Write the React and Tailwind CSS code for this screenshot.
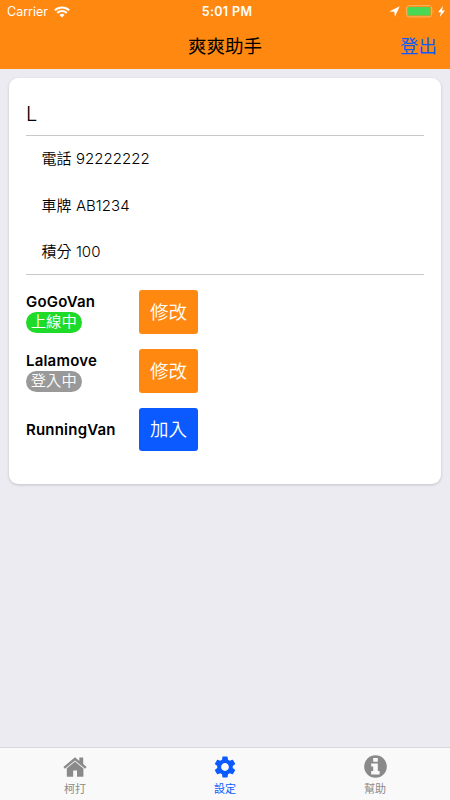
import { MdSettings } from "react-icons/md";

const details = [
  { label: "電話", value: "92222222" },
  { label: "車牌", value: "AB1234" },
  { label: "積分", value: "100" },
];

const services = [
  { name: "GoGoVan", status: "上線中", badge: "bg-[#1fdb29]", action: "修改", button: "bg-[#ff8811]" },
  { name: "Lalamove", status: "登入中", badge: "bg-[#999999]", action: "修改", button: "bg-[#ff8811]" },
  { name: "RunningVan", action: "加入", button: "bg-[#0a5aff]" },
];

function HomeIcon() {
  return (
    <svg width="24" height="20" viewBox="0 0 24 20" fill="currentColor">
      <path d="M12 0.3 0.4 10 1.9 11.8 12 3.5 22.1 11.8 23.6 10 20.2 7.1V0.5H16.3V3.9Z" />
      <path d="M12 4.6 3.8 11.3V19.8H10.2V13.4H14V19.8H20.4V11.4Z" />
    </svg>
  );
}

function InfoIcon() {
  return (
    <svg width="23" height="23" viewBox="0 0 23 23">
      <circle cx="11.5" cy="11.5" r="11.3" fill="currentColor" />
      <path d="M9.2 3H13.8V6.8H9.2ZM7.2 8.6H13.8V16H15.6V19.4H7.2V16H9.2V11.6H7.2Z" fill="#f9f9f9" />
    </svg>
  );
}

function StatusBar() {
  return (
    <div className="grid h-[23px] grid-cols-3 items-center text-[12.5px] leading-none text-white">
      <div className="flex items-center gap-[6px] pl-[7px]">
        <span className="pt-[1px]">Carrier</span>
        <svg width="16" height="12" viewBox="0 0 16 12" fill="none" stroke="currentColor" strokeWidth="2">
          <path d="M0.8 4.4a10.2 10.2 0 0 1 14.4 0M3.2 7a6.8 6.8 0 0 1 9.6 0" />
          <path d="M8 11.5 5.5 9a3.5 3.5 0 0 1 5 0Z" fill="currentColor" stroke="none" />
        </svg>
      </div>
      <span className="pl-[4px] pt-[1px] text-center font-semibold tracking-[0.35px]">5:01 PM</span>
      <div className="flex items-center justify-end pr-[5px]">
        <svg className="mr-[6px]" width="11" height="11" viewBox="0 0 11 11" fill="currentColor">
          <path d="M10.7 0.2 0.2 5.6 5.3 5.8 5.9 10.7Z" />
        </svg>
        <svg className="mr-[3px]" width="29" height="13" viewBox="0 0 29 13" fill="none">
          <rect x="0.7" y="0.7" width="25" height="11.2" rx="2.3" stroke="#ffb566" strokeWidth="1" />
          <rect x="2" y="2" width="22.4" height="8.6" rx="0.8" fill="#48d856" />
          <path d="M27 4.5q1.6 1.8 0 3.7Z" fill="#ffb566" />
        </svg>
        <svg width="7" height="11" viewBox="0 0 7 11" fill="currentColor">
          <path d="M5 0 0 6.2H2.9L1.8 11 7 4.5H4.1Z" />
        </svg>
      </div>
    </div>
  );
}

function Header() {
  return (
    <header className="h-[69px] bg-[#ff8811]">
      <StatusBar />
      <div className="grid h-[46px] grid-cols-3 items-center text-[18.5px] leading-none">
        <span />
        <h1 className="text-center font-normal text-black">爽爽助手</h1>
        <button className="pr-[13px] text-right font-normal text-[#0a5aff]">登出</button>
      </div>
    </header>
  );
}

function ServiceRow({ name, status, badge, action, button }) {
  return (
    <div className="flex h-[43.5px] items-center">
      <div className="w-[113px]">
        <div className="text-[15px] font-semibold leading-[21px] tracking-[0.2px]">{name}</div>
        {status && (
          <span className={`flex h-[21px] w-[55.5px] items-center justify-center rounded-full pb-[1px] text-[15.3px] font-[350] leading-none text-white ${badge}`}>
            {status}
          </span>
        )}
      </div>
      <button className={`h-[43.5px] w-[59px] rounded-[3px] text-[18.5px] font-[350] leading-none text-white ${button}`}>
        {action}
      </button>
    </div>
  );
}

function Tab({ icon, label, active }) {
  return (
    <button className={`flex flex-col items-center pt-[6px] ${active ? "text-[#0a5aff]" : "text-[#8a8a8a]"}`}>
      <span className="flex h-[25px] items-center justify-center">{icon}</span>
      <span className="mt-[4px] text-[11px] leading-[13px]">{label}</span>
    </button>
  );
}

export default function App() {
  return (
    <div className="flex h-screen w-full flex-col bg-[#ebebf1] font-['Inter','Noto_Sans_CJK_TC',sans-serif] text-black">
      <Header />

      <main className="flex-1 px-[9px] pt-[9px]">
        <section className="h-[406px] rounded-[9px] bg-white px-[17px] pt-[18px] shadow-[0_1px_3px_rgba(0,0,0,0.18)]">
          <h2 className="h-[40px] border-b border-[#c8c8c8] text-[20px] font-[350] leading-[36px]">L</h2>
          <div className="flex flex-col gap-[1.5px] border-b border-[#c8c8c8] pl-[15.5px]">
            {details.map((item) => (
              <p key={item.label} className="flex h-[45px] items-center text-[15px] font-[350] leading-none tracking-[0.05px]">
                {item.label} {item.value}
              </p>
            ))}
          </div>
          <div className="flex flex-col gap-[15.2px] pt-[15.4px]">
            {services.map((service) => (
              <ServiceRow key={service.name} {...service} />
            ))}
          </div>
        </section>
      </main>

      <nav className="grid h-[53px] grid-cols-3 border-t border-[#d9d9dd] bg-[#f9f9f9]">
        <Tab icon={<HomeIcon />} label="柯打" />
        <Tab icon={<MdSettings size={26} />} label="設定" active />
        <Tab icon={<InfoIcon />} label="幫助" />
      </nav>
    </div>
  );
}
